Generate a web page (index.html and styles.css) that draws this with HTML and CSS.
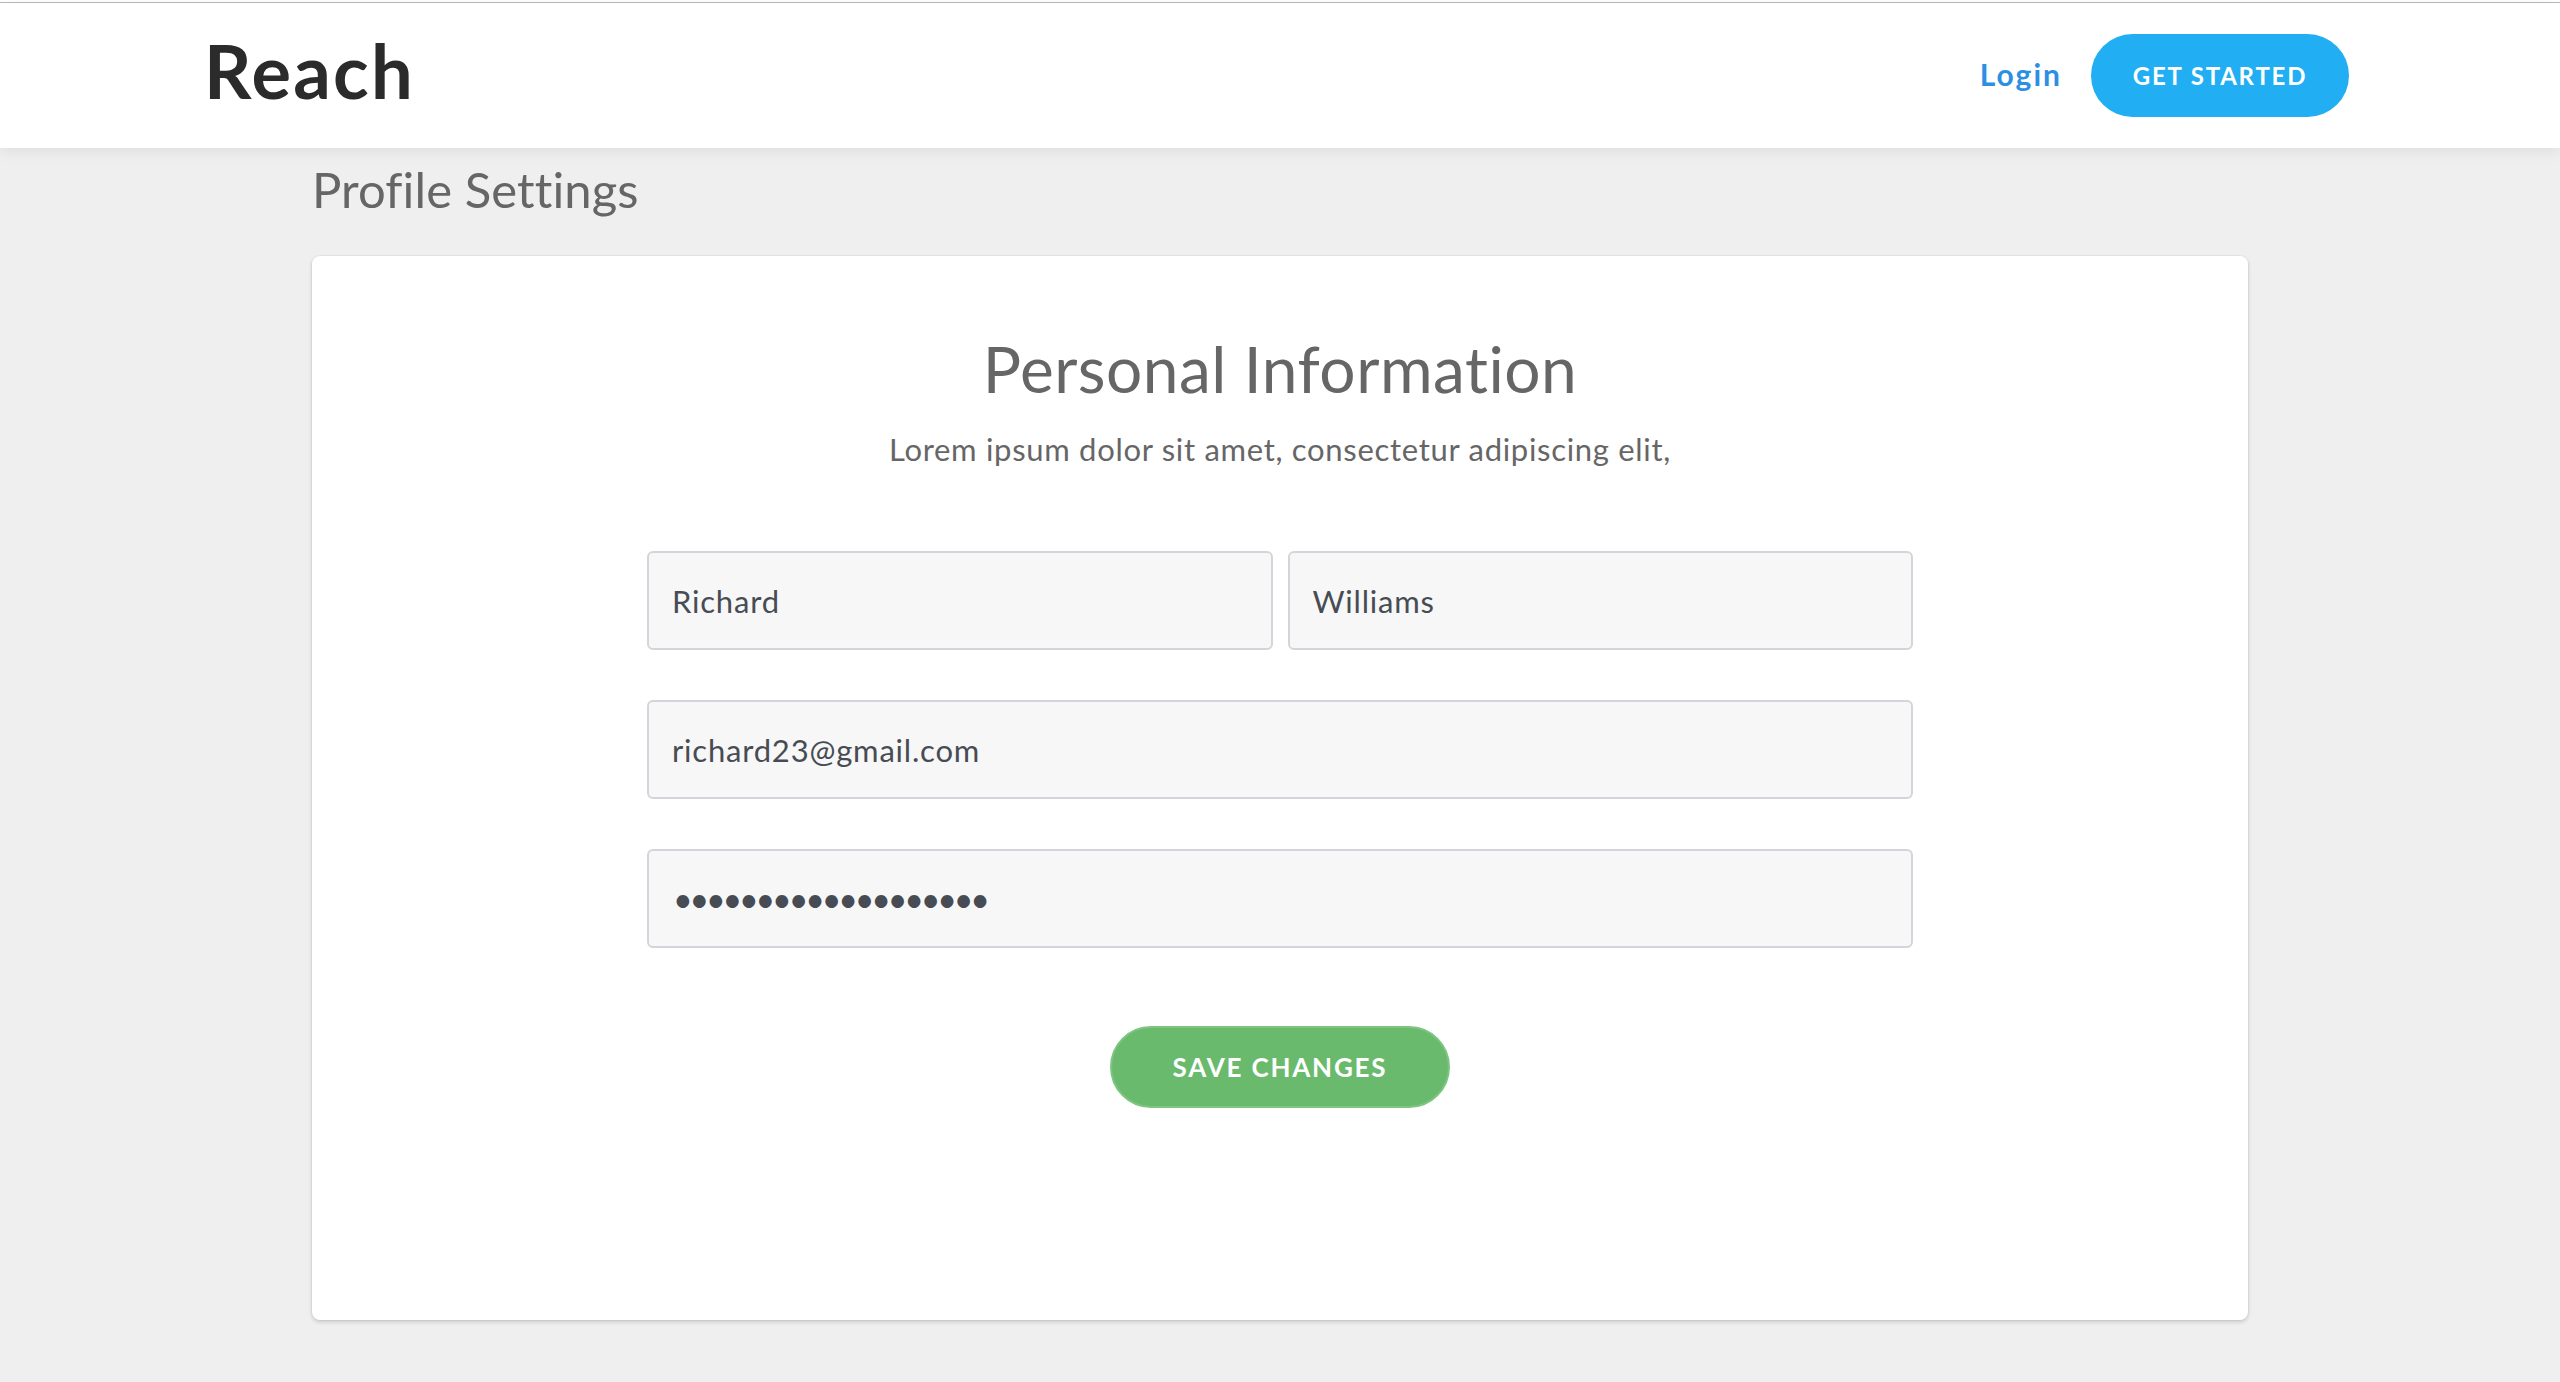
FILE: index.html
```html
<!DOCTYPE html>
<html lang="en">
<head>
<meta charset="utf-8">
<title>Reach - Profile Settings</title>
<link rel="stylesheet" href="styles.css">
</head>
<body>
<div class="topline"></div>
<header class="site-header">
  <a class="brand" href="#">Reach</a>
  <nav class="nav">
    <a class="nav-login" href="#">Login</a>
    <a class="btn-start" href="#">GET STARTED</a>
  </nav>
</header>
<main class="main">
  <h1 class="page-title">Profile Settings</h1>
  <section class="card">
    <h2 class="card-title">Personal Information</h2>
    <p class="card-sub">Lorem ipsum dolor sit amet, consectetur adipiscing elit,</p>
    <form class="form">
      <div class="row two">
        <input class="field" type="text" value="Richard">
        <input class="field" type="text" value="Williams">
      </div>
      <div class="row">
        <input class="field" type="email" value="richard23@gmail.com">
      </div>
      <div class="row">
        <input class="field pw" type="password" value="passwordpassword123">
      </div>
      <div class="actions">
        <button class="btn-save" type="button">SAVE CHANGES</button>
      </div>
    </form>
  </section>
</main>
</body>
</html>
```
FILE: styles.css
```css
html, body {
  margin: 0;
  padding: 0;
}
body {
  background: #efefef;
  font-family: "Lato", "Noto Sans", sans-serif;
  min-height: 1382px;
}
.topline {
  height: 2px;
  background: #fff;
  border-bottom: 1px solid #b9b9b9;
}
.site-header {
  height: 145px;
  background: #fff;
  display: flex;
  align-items: center;
  justify-content: space-between;
  padding: 0 211px 0 204px;
  box-shadow: 0 4px 14px rgba(0, 0, 0, 0.07);
  position: relative;
  z-index: 1;
}
.brand {
  font-size: 74px;
  font-weight: 700;
  line-height: 88px;
  color: #2b2b2b;
  text-decoration: none;
  letter-spacing: 2.3px;
  margin-bottom: 10px;
}
.nav {
  display: flex;
  align-items: center;
  gap: 29px;
}
.nav-login {
  font-size: 30px;
  font-weight: 700;
  color: #2c8fe2;
  text-decoration: none;
  letter-spacing: 2px;
  margin-bottom: 4px;
}
.btn-start {
  display: flex;
  align-items: center;
  justify-content: center;
  width: 258px;
  height: 83px;
  border-radius: 42px;
  background: #21aef2;
  color: #fff;
  font-size: 24px;
  font-weight: 700;
  letter-spacing: 1.8px;
  text-decoration: none;
}
.main {
  width: 1936px;
  margin: 0 auto;
  padding-top: 12px;
  padding-bottom: 60px;
}
.page-title {
  margin: 0 0 37px;
  font-size: 49px;
  font-weight: 400;
  line-height: 59px;
  color: #666;
  letter-spacing: 0.1px;
}
.card {
  background: #fff;
  border-radius: 8px;
  box-shadow: 0 2px 4px rgba(0, 0, 0, 0.16), 0 0 0 1px rgba(0, 0, 0, 0.03);
  padding: 74px 0 212px;
  text-align: center;
}
.card-title {
  margin: 0;
  font-size: 64px;
  font-weight: 400;
  line-height: 77px;
  color: #666;
  letter-spacing: 0.5px;
}
.card-sub {
  margin: 24px 0 0;
  font-size: 31px;
  line-height: 36px;
  color: #666;
  letter-spacing: 0.7px;
}
.form {
  width: 1266px;
  margin: 84px auto 0;
  display: flex;
  flex-direction: column;
  gap: 50px;
}
.row {
  display: flex;
  gap: 15px;
}
.field {
  flex: 1;
  min-width: 0;
  box-sizing: border-box;
  height: 99px;
  padding: 0 23px;
  border: 2px solid #d2d6db;
  border-radius: 6px;
  background: #f7f7f7;
  font-family: "Lato", "Noto Sans", sans-serif;
  font-size: 31px;
  letter-spacing: 0.8px;
  color: #474c54;
  outline: none;
}
.field.pw {
  font-size: 34px;
  letter-spacing: -3.2px;
  padding-left: 24px;
}
.actions {
  display: flex;
  justify-content: center;
  margin-top: 28px;
}
.btn-save {
  width: 340px;
  height: 82px;
  border-radius: 41px;
  border: 2px solid #7dc580;
  background: #6aba6e;
  color: #fff;
  font-family: "Lato", "Noto Sans", sans-serif;
  font-size: 26px;
  font-weight: 700;
  letter-spacing: 1.8px;
  cursor: pointer;
}
```
